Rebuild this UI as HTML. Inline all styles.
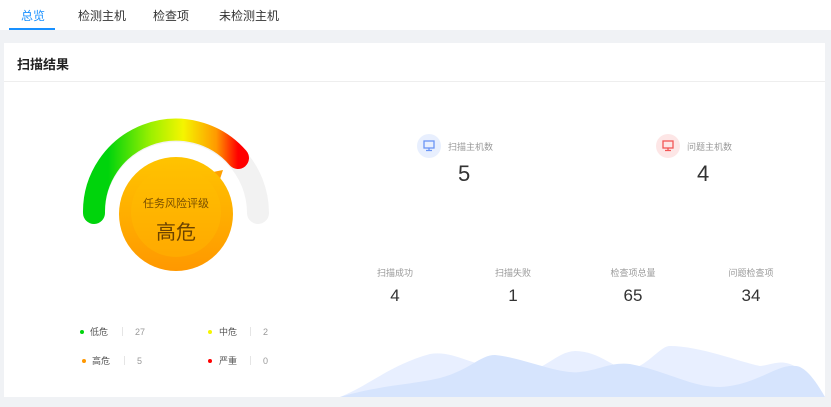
<!DOCTYPE html>
<html><head><meta charset="utf-8"><style>
*{margin:0;padding:0;box-sizing:border-box}
body{width:831px;height:407px;background:#f0f2f5;font-family:"Liberation Sans","Noto Sans CJK SC",sans-serif;position:relative;overflow:hidden;color:#333}
.abs{position:absolute;white-space:nowrap}
.tabs{position:absolute;left:0;top:0;width:831px;height:30px;background:#fff}
.tab{position:absolute;top:7px;font-size:12px;color:#333}
.card{position:absolute;left:4px;top:43px;width:821px;height:354px;background:#fff}
.lbl{font-size:9px;color:#999;transform:translateX(-50%)}
.num{font-size:17px;color:#333;transform:translateX(-50%)}
.leg{font-size:9px;color:#555;height:12px;line-height:12px}
.dot{position:absolute;width:4px;height:4px;border-radius:50%}
.div{position:absolute;width:1px;height:9px;background:#e5e5e5}
</style></head><body>
<div class="tabs">
 <div class="tab" style="left:21px;color:#1890ff">总览</div>
 <div class="tab" style="left:78px">检测主机</div>
 <div class="tab" style="left:153px">检查项</div>
 <div class="tab" style="left:219px">未检测主机</div>
 <div class="abs" style="left:9px;top:28px;width:46px;height:2px;background:#1890ff"></div>
</div>
<div class="card">
 <div class="abs" style="left:13px;top:11px;font-size:13px;color:#222;font-weight:bold">扫描结果</div>
 <div class="abs" style="left:0;top:38px;width:821px;height:1px;background:#eee"></div>
</div>
<svg class="abs" style="left:0;top:0" width="831" height="407">
 <defs>
  <linearGradient id="g" x1="0" y1="0" x2="1" y2="0">
   <stop offset="0.1" stop-color="#00d40c"/><stop offset="0.4" stop-color="#9ef000"/>
   <stop offset="0.62" stop-color="#f5f500"/><stop offset="0.85" stop-color="#ff9900"/><stop offset="1" stop-color="#ff0000"/>
  </linearGradient>
  <linearGradient id="c" x1="0" y1="0" x2="0" y2="1">
   <stop offset="0" stop-color="#ffc400"/><stop offset="1" stop-color="#ff9800"/>
  </linearGradient>
 </defs>
 <path d="M94 213 A82 82 0 0 1 258 213" fill="none" stroke="#f2f2f2" stroke-width="22" stroke-linecap="round"/>
 <path d="M94 213 A82 82 0 0 1 238 158" fill="none" stroke="url(#g)" stroke-width="22" stroke-linecap="round"/>
 <polygon points="213,172 223,170 219,182" fill="#ffa000"/>
 <circle cx="176" cy="214" r="57" fill="url(#c)"/>
 <circle cx="176" cy="212" r="45" fill="#ffbf00" opacity="0.35"/>
 <path d="M340 397 C370 385 390 365 430 354 C455 350 470 367 520 372 C545 372 555 352 575 351 C600 351 615 370 630 370 C650 364 660 346 670 346 C700 346 740 362 760 366 C780 364 790 350 825 397 Z" fill="#e8efff"/>
 <path d="M340 397 C380 385 410 385 440 378 C470 370 480 355 495 355 C520 357 560 375 580 372 C600 370 610 362 630 364 C670 372 690 387 720 387 C760 385 780 360 800 367 C810 372 818 385 825 397 Z" fill="#d6e4fd"/>
 <circle cx="429" cy="146" r="12" fill="#e8effe"/>
 <rect x="424" y="141" width="10" height="7" fill="none" stroke="#6b95f5" stroke-width="1.3"/>
 <path d="M429 148v2M426 150.5h6" stroke="#6b95f5" stroke-width="1.3"/>
 <circle cx="668" cy="146" r="12" fill="#fde6e6"/>
 <rect x="663" y="141" width="10" height="7" fill="none" stroke="#f25555" stroke-width="1.3"/>
 <path d="M668 148v2M665 150.5h6" stroke="#f25555" stroke-width="1.3"/>
</svg>
<div class="abs" style="left:176px;top:195px;transform:translateX(-50%);font-size:11px;color:#7a4f00">任务风险评级</div>
<div class="abs" style="left:176px;top:216px;transform:translateX(-50%);font-size:20px;color:#6b4200">高危</div>

<div class="dot" style="left:80px;top:330px;background:#00d40c"></div><div class="abs leg" style="left:90px;top:326px">低危</div><div class="div" style="left:122px;top:327px"></div><div class="abs leg" style="left:135px;top:326px;color:#999">27</div>
<div class="dot" style="left:208px;top:330px;background:#f5f500"></div><div class="abs leg" style="left:219px;top:326px">中危</div><div class="div" style="left:250px;top:327px"></div><div class="abs leg" style="left:263px;top:326px;color:#999">2</div>
<div class="dot" style="left:82px;top:359px;background:#ff9800"></div><div class="abs leg" style="left:92px;top:355px">高危</div><div class="div" style="left:124px;top:356px"></div><div class="abs leg" style="left:137px;top:355px;color:#999">5</div>
<div class="dot" style="left:208px;top:359px;background:#ff0000"></div><div class="abs leg" style="left:219px;top:355px">严重</div><div class="div" style="left:250px;top:356px"></div><div class="abs leg" style="left:263px;top:355px;color:#999">0</div>

<div class="abs" style="left:448px;top:140px;font-size:9px;color:#999">扫描主机数</div>
<div class="abs" style="left:458px;top:161px;font-size:22px">5</div>
<div class="abs" style="left:687px;top:140px;font-size:9px;color:#999">问题主机数</div>
<div class="abs" style="left:697px;top:161px;font-size:22px">4</div>

<div class="abs lbl" style="left:395px;top:266px">扫描成功</div><div class="abs num" style="left:395px;top:286px">4</div>
<div class="abs lbl" style="left:513px;top:266px">扫描失败</div><div class="abs num" style="left:513px;top:286px">1</div>
<div class="abs lbl" style="left:633px;top:266px">检查项总量</div><div class="abs num" style="left:633px;top:286px">65</div>
<div class="abs lbl" style="left:751px;top:266px">问题检查项</div><div class="abs num" style="left:751px;top:286px">34</div>
</body></html>
